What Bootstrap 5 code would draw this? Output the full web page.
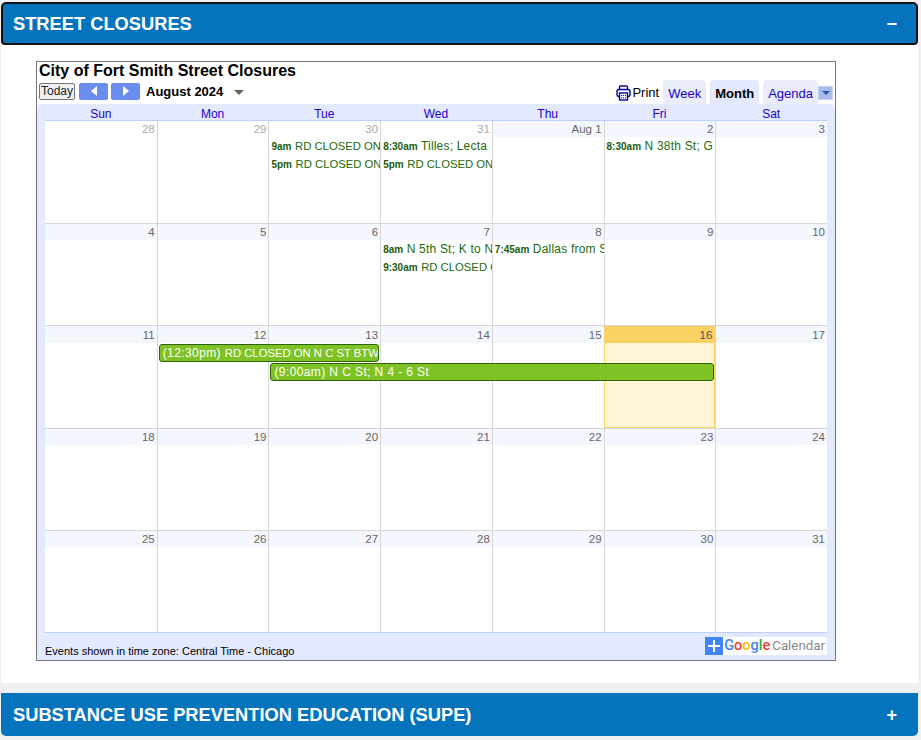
<!DOCTYPE html>
<html lang="en">
<head>
  <meta charset="UTF-8">
  <meta name="viewport" content="width=device-width, initial-scale=1.0">
  <title>Street Closures</title>
  <link href="https://cdn.jsdelivr.net/npm/bootstrap@5.3.2/dist/css/bootstrap.min.css" rel="stylesheet">
  <style>
    body { background-color: #f0f0f0; font-family: "Liberation Sans", Arial, sans-serif; }
    .page-wrap { width: 917px; margin-left: 1px; padding-top: 2px; }
    .sec-item { background: #fff; border: 0; border-radius: 0; --bs-accordion-border-width: 0; }
    .sec-btn { background: #0674bd; color: #fff; height: 43px; padding: 0 12px; font-size: 18.3px; font-weight: 700; box-shadow: none; border-radius: 0; }
    .sec-btn:not(.collapsed) { background: #0674bd; color: #fff; box-shadow: none; }
    .sec-btn::after { display: none; }
    .sec-btn.is-open { border: 2px solid #111; border-radius: 4px; padding: 1px 10px 0; }
    .sec-sign { font-size: 18px; font-weight: 700; line-height: 1; margin-right: 9px; }
    .sec-body { padding: 16px 82px 22px 35px; background: #fff; }
    .sec-gap { margin-top: 10px; }

    .cal-frame { width: 800px; height: 600px; border: 1px solid #777; background: #fff; display: flex; flex-direction: column; color: #000; }
    .cal-title { font-size: 16px; font-weight: 700; line-height: 18px; padding: 0 2px; height: 18px; }
    .cal-bar { height: 24px; padding: 0 2px; }
    .cal-nav { margin-bottom: 3px; gap: 3px; }
    .cal-today { width: 36px; height: 17px; margin-right: 1px; font-size: 12px; line-height: 14px; padding: 0; background: #f0f0f0; border: 1px solid #777; border-radius: 2px; color: #222; }
    .cal-arrow { width: 29px; height: 17px; background: #6b8df0; border-radius: 2px; }
    .cal-month { font-size: 13px; font-weight: 700; margin-left: 3px; }
    .cal-caret { width: 0; height: 0; border-left: 5px solid transparent; border-right: 5px solid transparent; border-top: 5px solid #666; margin-left: 8px; margin-top: 2px; }
    .cal-print { font-size: 13px; line-height: 16px; margin-bottom: 3px; gap: 1px; }
    .cal-tab { height: 24px; padding: 0 5px; margin-left: 4px; background: #e8edf9; color: #2200cc; font-size: 13px; line-height: 27px; border-radius: 4px 4px 0 0; }
    .cal-tab.is-on { background: #e3e9ff; color: #000; font-weight: 700; }
    .cal-drop { width: 15px; height: 14px; margin-bottom: 4px; background: #a8bcec; border: 1px solid #c3d2f5; display: flex; align-items: center; justify-content: center; }
    .cal-drop i { width: 0; height: 0; border-left: 4px solid transparent; border-right: 4px solid transparent; border-top: 4px solid #2952a3; }

    .cal-panel { flex: 1; min-height: 0; background: #e3e9ff; border-radius: 4px 4px 0 0; padding: 0 8px; display: flex; flex-direction: column; }
    .cal-head { display: grid; grid-template-columns: repeat(7, 1fr); height: 17px; border-bottom: 1px solid #bcd0ff; font-size: 12px; line-height: 14px; padding-top: 3px; color: #2200cc; text-align: center; flex: none; }
    .cal-weeks { flex: 1; min-height: 0; display: grid; grid-template-rows: 102px 102px 103px 102px 102px; background: #fff; border-bottom: 1px solid #bcd0ff; }
    .cal-week { display: grid; min-height: 0; grid-template-columns: repeat(7, minmax(0, 1fr)); grid-template-rows: 16px 18px 17px 1fr; border-top: 1px solid #d8d8d8; }
    .cal-week:first-child { border-top: 0; }
    .cal-week.has-bars { grid-template-rows: 17px 19px 19px 1fr; }
    .day-cell { grid-row: 1 / 5; border-left: 1px solid #d8d8d8; min-width: 0; }
    .day-cell:first-child { border-left: 0; }
    .day-num { height: 16px; background: #f5f7ff; color: #666; font-size: 11.5px; line-height: 16px; text-align: right; padding-right: 2px; }
    .has-bars .day-num { height: 17px; line-height: 18px; }
    .day-cell.is-other .day-num { background: #fff; color: #aaa; }
    .day-cell.is-today { background: #fff5d6; border: 1px solid #fad163; border-top: 0; }
    .day-cell.is-today .day-num { background: #fad163; color: #555; }
    .ev-line { padding-left: 3px; font-size: 12px; letter-spacing: .2px; line-height: 18px; color: #1d6b0b; white-space: nowrap; overflow: hidden; min-width: 0; }
    .ev-line b { font-size: 10px; letter-spacing: 0; color: #1d5b0b; }
    .ev-caps { font-size: 11.3px; letter-spacing: 0; }
    .ev-bar { margin: 1px 1px 0 2px; height: 18px; background: #7ec225; border: 1px solid #2f6309; border-radius: 3px; color: #fff; font-size: 12px; letter-spacing: .4px; line-height: 16px; padding-left: 3px; white-space: nowrap; overflow: hidden; min-width: 0; z-index: 1; }
    .cal-foot { height: 27px; flex: none; font-size: 11px; }
    .cal-foot-text { padding-top: 11px; line-height: 15px; }
    .gcal-mark { width: 122px; height: 18px; margin-top: 4px; background: #fff; font-family: Roboto, sans-serif; font-size: 13.3px; line-height: 18px; color: #888; white-space: nowrap; }
    .gcal-plus { width: 18px; height: 18px; background: #4285f4; flex: none; }
    .gcal-word { margin-right: 2px; }
    .gcal-logo { font-size: 14.5px; font-weight: 500; margin-right: 2px; }
    .g-b { color: #4285f4; } .g-r { color: #ea4335; } .g-y { color: #fbbc05; } .g-g { color: #34a853; }
  </style>
</head>
<body>
<div class="page-wrap">
  <div class="accordion">
    <div class="accordion-item sec-item">
      <h2 class="accordion-header">
        <button class="accordion-button sec-btn is-open d-flex justify-content-between" type="button">
          <span>STREET CLOSURES</span><span class="sec-sign">−</span>
        </button>
      </h2>
      <div class="sec-body">
        <div class="cal-frame">
          <div class="cal-title">City of Fort Smith Street Closures</div>
          <div class="cal-bar d-flex align-items-end">
            <div class="cal-nav d-flex align-items-center">
              <button class="cal-today" type="button">Today</button>
              <span class="cal-arrow d-flex align-items-center justify-content-center">
                <svg width="6" height="10" viewBox="0 0 6 10"><path d="M6 0v10L0 5z" fill="#fff"/></svg>
              </span>
              <span class="cal-arrow d-flex align-items-center justify-content-center">
                <svg width="6" height="10" viewBox="0 0 6 10"><path d="M0 0v10l6-5z" fill="#fff"/></svg>
              </span>
              <span class="cal-month">August 2024</span>
              <span class="cal-caret"></span>
            </div>
            <div class="ms-auto d-flex align-items-end">
              <div class="cal-print d-flex align-items-center">
                <svg width="15" height="16" viewBox="0 0 15 16" fill="none" stroke="#00a" stroke-width="1.4">
                  <path d="M3.5 5V2.2A1.2 1.2 0 0 1 4.7 1h5.6a1.2 1.2 0 0 1 1.2 1.2V5"/>
                  <rect x="1" y="4.5" width="13" height="7" rx="2"/>
                  <rect x="3.5" y="8" width="8" height="7" fill="#fff"/>
                  <path d="M5 10.5h1M7 10.5h1M9 10.5h1M5 12.8h1M7 12.8h1M9 12.8h1" stroke-width="1"/>
                </svg>
                <span>Print</span>
              </div>
              <span class="cal-tab">Week</span>
              <span class="cal-tab is-on">Month</span>
              <span class="cal-tab">Agenda</span>
              <span class="cal-drop"><i></i></span>
            </div>
          </div>
          <div class="cal-panel">
            <div class="cal-head">
              <div>Sun</div><div>Mon</div><div>Tue</div><div>Wed</div><div>Thu</div><div>Fri</div><div>Sat</div>
            </div>
            <div class="cal-weeks" id="weeks"></div>
            <div class="cal-foot d-flex justify-content-between">
              <div class="cal-foot-text">Events shown in time zone: Central Time - Chicago</div>
              <div class="gcal-mark d-flex justify-content-between">
                <span class="gcal-plus d-flex align-items-center justify-content-center">
                  <svg width="12" height="12" viewBox="0 0 12 12"><path d="M5 0h2v5h5v2H7v5H5V7H0V5h5z" fill="#fff"/></svg>
                </span>
                <span class="gcal-word"><span class="gcal-logo"><span class="g-b">G</span><span class="g-r">o</span><span class="g-y">o</span><span class="g-b">g</span><span class="g-g">l</span><span class="g-r">e</span></span>Calendar</span>
              </div>
            </div>
          </div>
        </div>
      </div>
    </div>
    <div class="accordion-item sec-item sec-gap">
      <h2 class="accordion-header">
        <button class="accordion-button sec-btn collapsed d-flex justify-content-between" type="button">
          <span>SUBSTANCE USE PREVENTION EDUCATION (SUPE)</span><span class="sec-sign">+</span>
        </button>
      </h2>
    </div>
  </div>
</div>

<script src="https://cdn.jsdelivr.net/npm/bootstrap@5.3.2/dist/js/bootstrap.bundle.min.js"></script>
<script>
const mayus = '<span class="ev-caps">RD CLOSED ON</span>';
const semanas = [
  { dias: ['28', '29', '30', '31', 'Aug 1', '2', '3'], otros: 4, eventos: [
    { col: 3, fila: 2, hora: '9am', txt: mayus },
    { col: 3, fila: 3, hora: '5pm', txt: mayus },
    { col: 4, fila: 2, hora: '8:30am', txt: 'Tilles; Lecta' },
    { col: 4, fila: 3, hora: '5pm', txt: mayus },
    { col: 6, fila: 2, hora: '8:30am', txt: 'N 38th St; G' }
  ]},
  { dias: ['4', '5', '6', '7', '8', '9', '10'], eventos: [
    { col: 4, fila: 2, hora: '8am', txt: 'N 5th St; K to N' },
    { col: 4, fila: 3, hora: '9:30am', txt: mayus },
    { col: 5, fila: 2, hora: '7:45am', txt: 'Dallas from S' }
  ]},
  { dias: ['11', '12', '13', '14', '15', '16', '17'], hoy: 5, barras: [
    { col: '2 / 4', fila: 2, txt: '(12:30pm) <span class="ev-caps">RD CLOSED ON N C ST BTW</span>' },
    { col: '3 / 7', fila: 3, txt: '(9:00am) N C St; N 4 - 6 St' }
  ]},
  { dias: ['18', '19', '20', '21', '22', '23', '24'] },
  { dias: ['25', '26', '27', '28', '29', '30', '31'] }
];

let html = '';
semanas.forEach(s => {
  html += `<div class="cal-week${s.barras ? ' has-bars' : ''}">`;
  s.dias.forEach((d, i) => {
    let cls = 'day-cell';
    if (i < (s.otros || 0)) cls += ' is-other';
    if (i === s.hoy) cls += ' is-today';
    html += `<div class="${cls}" style="grid-column:${i + 1}"><div class="day-num">${d}</div></div>`;
  });
  (s.eventos || []).forEach(e => {
    html += `<div class="ev-line" style="grid-column:${e.col};grid-row:${e.fila}"><b>${e.hora}</b> ${e.txt}</div>`;
  });
  (s.barras || []).forEach(b => {
    html += `<div class="ev-bar" style="grid-column:${b.col};grid-row:${b.fila}">${b.txt}</div>`;
  });
  html += '</div>';
});
document.getElementById('weeks').innerHTML = html;
</script>
</body>
</html>
